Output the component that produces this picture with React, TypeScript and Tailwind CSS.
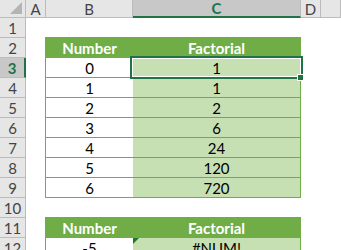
import React from 'react'

const COLS = [
  { key: 'A', w: 'w-[20px]' },
  { key: 'B', w: 'w-[87px]' },
  { key: 'C', w: 'w-[168px]', selected: true },
  { key: 'D', w: 'w-[20px]' },
  { key: 'E', w: 'flex-1', blank: true },
]

const ROWS = [1, 2, 3, 4, 5, 6, 7, 8, 9, 10, 11, 12]

const table1 = [
  ['0', '1'],
  ['1', '1'],
  ['2', '2'],
  ['3', '6'],
  ['4', '24'],
  ['5', '120'],
  ['6', '720'],
]

const table2 = [['-5', '#NUM!']]

function Table({ rows, errorMark }: { rows: string[][]; errorMark?: boolean }) {
  return (
    <div className="w-[256px] border border-[#70ad47] text-[15px] text-black">
      <div className="flex h-[19px] bg-[#70ad47] font-bold text-white leading-none">
        <div className="w-[87px] flex items-center justify-center pt-[1px]">Number</div>
        <div className="flex-1 flex items-center justify-center pt-[1px]">Factorial</div>
      </div>
      {rows.map((r, i) => (
        <div key={i} className="flex h-[20px] border-t border-[#70ad47] leading-none">
          <div className="w-[87px] bg-white flex items-center justify-center pt-[2px]">{r[0]}</div>
          <div className="relative flex-1 bg-[#c6e0b4] flex items-center justify-center pt-[2px]">
            {errorMark && (
              <svg className="absolute left-0 top-0" width="6" height="6" viewBox="0 0 6 6">
                <polygon points="0,0 6,0 0,6" fill="#1f7a1f" />
              </svg>
            )}
            {r[1]}
          </div>
        </div>
      ))}
    </div>
  )
}

export default function App() {
  return (
    <div className="relative w-[341px] h-[250px] overflow-hidden bg-white font-['Lato','Liberation_Sans',sans-serif]">
      {/* column headers */}
      <div className="flex h-[18px] text-[15px] leading-none">
        <div className="relative w-[26px] bg-[#e6e6e6] border-r border-b border-[#bcbcbc]">
          <svg className="absolute right-[3px] bottom-[3px]" width="12" height="12" viewBox="0 0 12 12">
            <polygon points="12,0 12,12 0,12" fill="#b4b4b4" />
          </svg>
        </div>
        {COLS.map(c => (
          <div
            key={c.key}
            className={
              c.selected
                ? `${c.w} bg-[#c8c8c8] border-r border-[#bcbcbc] border-b-2 border-b-[#217346] text-[#217346] font-bold flex items-center justify-center pt-[1px]`
                : `${c.w} bg-[#e6e6e6] border-r border-b border-[#bcbcbc] text-[#444] flex items-center justify-center pt-[1px]`
            }
          >
            {c.blank ? '' : c.key}
          </div>
        ))}
      </div>

      <div className="flex">
        {/* row headers */}
        <div className="w-[26px] flex flex-col text-[15px] leading-none">
          {ROWS.map(n => (
            <div
              key={n}
              className={
                n === 3
                  ? 'h-[20px] shrink-0 bg-[#c8c8c8] border-b border-[#bcbcbc] border-r-2 border-r-[#217346] text-[#217346] font-bold flex items-center justify-center pt-[2px]'
                  : 'h-[20px] shrink-0 bg-[#e6e6e6] border-b border-r border-[#bcbcbc] text-[#444] flex items-center justify-center pt-[2px]'
              }
            >
              {n}
            </div>
          ))}
        </div>

        {/* sheet */}
        <div className="flex-1 flex flex-col pl-[19px]">
          <div className="h-[19px] shrink-0" />
          <Table rows={table1} />
          <div className="h-[19px] shrink-0" />
          <Table rows={table2} errorMark />
        </div>
      </div>

      {/* active cell C3 */}
      <div className="absolute left-[130px] top-[56px] w-[173px] h-[23px] border-2 border-[#217346]">
        <div className="w-full h-full border border-white" />
      </div>
      <div className="absolute left-[297px] top-[74px] w-[7px] h-[7px] bg-[#217346] border border-white" />
    </div>
  )
}
